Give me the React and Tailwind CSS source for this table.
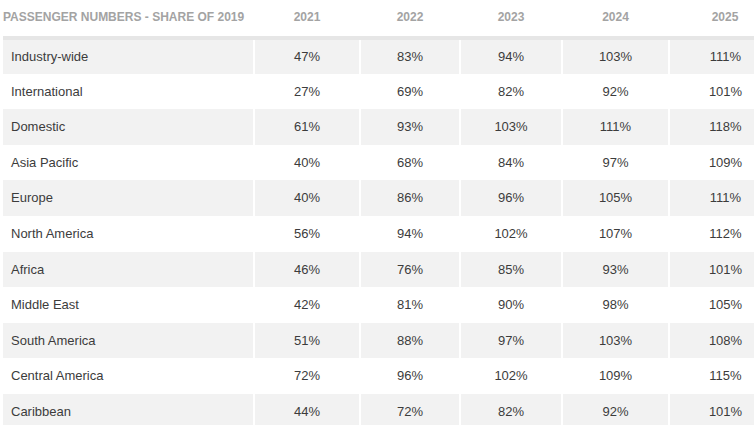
const years = ["2021", "2022", "2023", "2024", "2025"];

const rows = [
  ["Industry-wide", "47%", "83%", "94%", "103%", "111%"],
  ["International", "27%", "69%", "82%", "92%", "101%"],
  ["Domestic", "61%", "93%", "103%", "111%", "118%"],
  ["Asia Pacific", "40%", "68%", "84%", "97%", "109%"],
  ["Europe", "40%", "86%", "96%", "105%", "111%"],
  ["North America", "56%", "94%", "102%", "107%", "112%"],
  ["Africa", "46%", "76%", "85%", "93%", "101%"],
  ["Middle East", "42%", "81%", "90%", "98%", "105%"],
  ["South America", "51%", "88%", "97%", "103%", "108%"],
  ["Central America", "72%", "96%", "102%", "109%", "115%"],
  ["Caribbean", "44%", "72%", "82%", "92%", "101%"],
];

const widths = ["w-[251px]", "w-[106px]", "w-[100px]", "w-[102px]", "w-[107px]", "w-[112px]"];

export default function App() {
  return (
    <div className="w-[754px] h-[425px] overflow-hidden bg-white pl-[3px] font-['Liberation_Sans',Arial,sans-serif]">
      <table className="border-collapse table-fixed w-[778px]">
        <colgroup>
          {widths.map((w, i) => (
            <col key={i} className={w} />
          ))}
        </colgroup>
        <thead>
          <tr className="h-[38px] border-b-[4px] border-[#e6e6e6]">
            <th className="text-left text-[12px] font-bold text-[#a3a3a3] uppercase p-0 pb-[3px] align-middle">
              Passenger numbers - share of 2019
            </th>
            {years.map((y) => (
              <th key={y} className="text-center text-[12px] font-bold text-[#a3a3a3] p-0 pb-[3px] align-middle">
                {y}
              </th>
            ))}
          </tr>
        </thead>
        <tbody>
          {rows.map((row, i) => (
            <tr key={i} className={i % 2 === 0 ? "bg-[#f2f2f2] h-[35.6px]" : "bg-white h-[35.6px]"}>
              {row.map((cell, j) => (
                <td
                  key={j}
                  className={
                    j === 0
                      ? "text-left pl-2 text-[13px] text-[#3c3c3c] p-0 align-middle"
                      : "text-center text-[13px] text-[#3c3c3c] p-0 align-middle border-l-2 border-white"
                  }
                >
                  {cell}
                </td>
              ))}
            </tr>
          ))}
        </tbody>
      </table>
    </div>
  );
}
